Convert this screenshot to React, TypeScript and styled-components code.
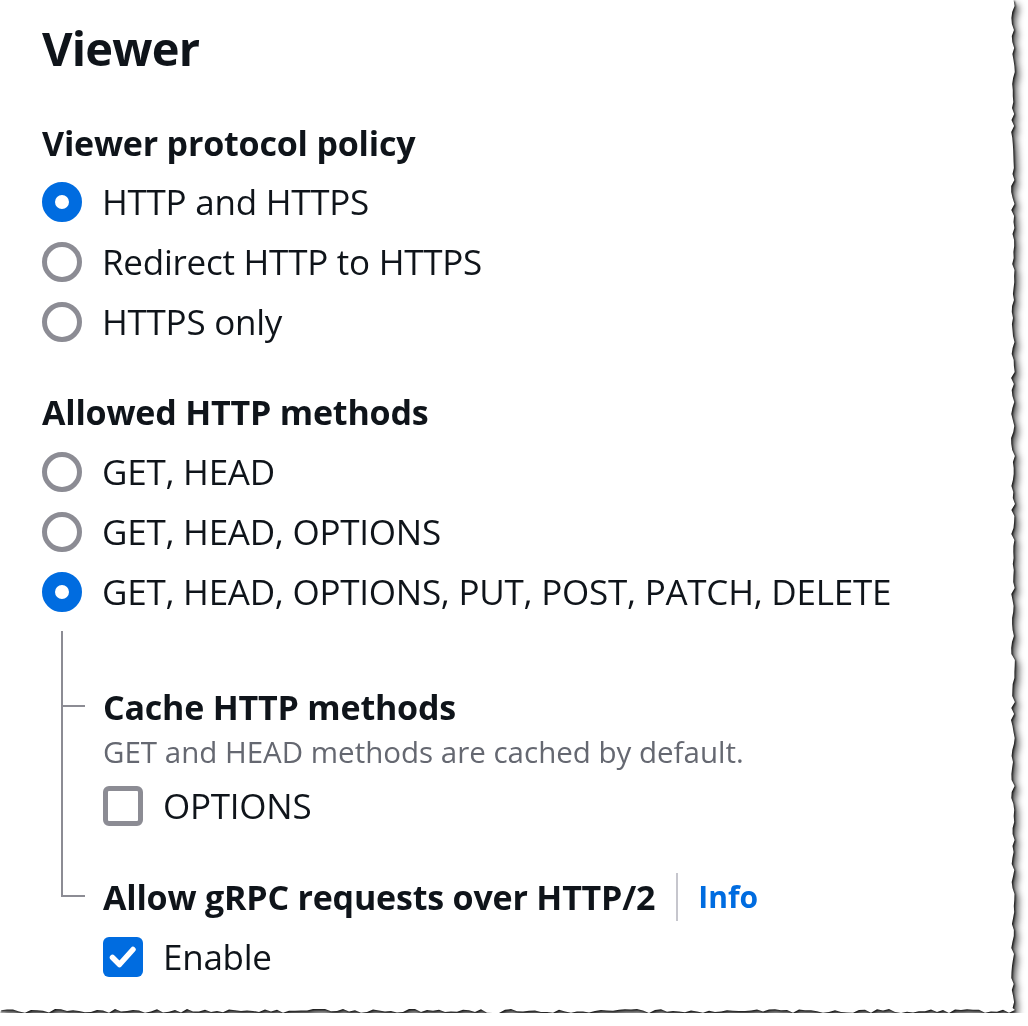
import React from "react";
import styled, { createGlobalStyle } from "styled-components";

const GlobalStyle = createGlobalStyle`
  html, body {
    margin: 0;
    padding: 0;
    background: #ffffff;
  }
  body {
    font-family: "Open Sans", "Noto Sans", Arial, sans-serif;
    color: #0f141a;
  }
`;

const PAPER_W = 1015;
const PAPER_H = 1013;

function tornEdge(): string {
  let seed = 11;
  const rnd = () => {
    seed = (seed * 9301 + 49297) % 233280;
    return seed / 233280;
  };
  const pts: string[] = ["0px 0px"];
  for (let y = 0; y <= PAPER_H; y += 6) {
    const x = PAPER_W - 2 + (rnd() - 0.5) * 4;
    pts.push(`${x.toFixed(1)}px ${y}px`);
  }
  for (let x = PAPER_W; x >= 0; x -= 6) {
    const y = PAPER_H - 2 + (rnd() - 0.5) * 4;
    pts.push(`${x}px ${y.toFixed(1)}px`);
  }
  pts.push(`0px ${PAPER_H}px`);
  return `polygon(${pts.join(", ")})`;
}

const Shadow = styled.div`
  width: ${PAPER_W}px;
  height: ${PAPER_H}px;
  filter: drop-shadow(1.5px 1.5px 0.8px rgba(0, 0, 0, 0.9))
    drop-shadow(3px 4px 3.5px rgba(0, 0, 0, 0.7));
`;

const Paper = styled.div`
  width: ${PAPER_W}px;
  height: ${PAPER_H}px;
  box-sizing: border-box;
  background: #ffffff;
  padding: 18px 0 0 42px;
  display: flex;
  flex-direction: column;
`;

const Heading = styled.h2`
  margin: 0;
  font-size: 47px;
  line-height: 60px;
  font-weight: 700;
  letter-spacing: -0.8px;
  color: #0f141a;
`;

const Field = styled.section<{ $top: number }>`
  margin-top: ${(p) => p.$top}px;
  display: flex;
  flex-direction: column;
`;

const Label = styled.div`
  display: flex;
  align-items: center;
  font-size: 34px;
  line-height: 50px;
  font-weight: 700;
  letter-spacing: -0.2px;
  color: #0f141a;
`;

const Description = styled.div`
  font-size: 29.5px;
  line-height: 40px;
  color: #656871;
`;

const Group = styled.div<{ $top: number }>`
  margin-top: ${(p) => p.$top}px;
  display: flex;
  flex-direction: column;
  gap: 10px;
`;

const OptionRow = styled.div`
  display: flex;
  align-items: center;
  gap: 20px;
  height: 50px;
  font-size: 35px;
  line-height: 50px;
  letter-spacing: -0.25px;
  color: #0f141a;
`;

const RadioDot = styled.span<{ $checked?: boolean }>`
  box-sizing: border-box;
  width: 40px;
  height: 40px;
  flex: none;
  border-radius: 50%;
  background: #ffffff;
  border: ${(p) => (p.$checked ? "13px solid #006ce0" : "5px solid #8c8c94")};
`;

const Box = styled.span<{ $checked?: boolean }>`
  box-sizing: border-box;
  width: 40px;
  height: 40px;
  flex: none;
  border-radius: 6px;
  display: flex;
  align-items: center;
  justify-content: center;
  background: ${(p) => (p.$checked ? "#006ce0" : "#ffffff")};
  border: ${(p) => (p.$checked ? "none" : "5px solid #8c8c94")};
`;

const Nested = styled.div`
  margin-top: 14px;
  margin-left: 19px;
  display: flex;
  flex-direction: column;
`;

const Branch = styled.div`
  display: flex;
`;

const Connector = styled.div<{ $last?: boolean }>`
  width: 42px;
  flex: none;
  box-sizing: border-box;
  border-left: ${(p) => (p.$last ? "none" : "2px solid #8c8c94")};
`;

const Tick = styled.div<{ $drop: number; $last?: boolean }>`
  box-sizing: border-box;
  height: ${(p) => p.$drop + 1}px;
  width: ${(p) => (p.$last ? 24 : 22)}px;
  border-bottom: 2px solid #8c8c94;
  border-left: ${(p) => (p.$last ? "2px solid #8c8c94" : "none")};
`;

const BranchBody = styled.div<{ $top: number; $bottom: number }>`
  padding-top: ${(p) => p.$top}px;
  padding-bottom: ${(p) => p.$bottom}px;
  display: flex;
  flex-direction: column;
`;

const Divider = styled.span`
  width: 2px;
  height: 48px;
  background: #c6c6cd;
  margin: 0 20px 0 21px;
`;

const InfoLink = styled.a`
  font-size: 30px;
  font-weight: 700;
  letter-spacing: 0;
  color: #006ce0;
  text-decoration: none;
`;

const Check = () => (
  <svg width="40" height="40" viewBox="0 0 40 40" fill="none">
    <polyline
      points="9.5,20.5 16.5,27.5 30,12.5"
      stroke="#ffffff"
      strokeWidth="5.5"
      strokeLinecap="round"
      strokeLinejoin="round"
    />
  </svg>
);

const Radio = ({ label, checked }: { label: string; checked?: boolean }) => (
  <OptionRow>
    <RadioDot $checked={checked} />
    <span>{label}</span>
  </OptionRow>
);

const Checkbox = ({ label, checked }: { label: string; checked?: boolean }) => (
  <OptionRow>
    <Box $checked={checked}>{checked && <Check />}</Box>
    <span>{label}</span>
  </OptionRow>
);

export default function App() {
  const edge = tornEdge();
  return (
    <>
      <GlobalStyle />
      <Shadow>
        <Paper style={{ clipPath: edge }}>
          <Heading>Viewer</Heading>

          <Field $top={40}>
            <Label>Viewer protocol policy</Label>
            <Group $top={9}>
              <Radio label="HTTP and HTTPS" checked />
              <Radio label="Redirect HTTP to HTTPS" />
              <Radio label="HTTPS only" />
            </Group>
          </Field>

          <Field $top={40}>
            <Label>Allowed HTTP methods</Label>
            <Group $top={10}>
              <Radio label="GET, HEAD" />
              <Radio label="GET, HEAD, OPTIONS" />
              <Radio label="GET, HEAD, OPTIONS, PUT, POST, PATCH, DELETE" checked />
            </Group>
          </Field>

          <Nested>
            <Branch>
              <Connector>
                <Tick $drop={75} />
              </Connector>
              <BranchBody $top={51} $bottom={41}>
                <Label>Cache HTTP methods</Label>
                <Description>GET and HEAD methods are cached by default.</Description>
                <Group $top={9}>
                  <Checkbox label="OPTIONS" />
                </Group>
              </BranchBody>
            </Branch>
            <Branch>
              <Connector $last>
                <Tick $drop={24} $last />
              </Connector>
              <BranchBody $top={0} $bottom={0}>
                <Label>
                  Allow gRPC requests over HTTP/2
                  <Divider />
                  <InfoLink href="#">Info</InfoLink>
                </Label>
                <Group $top={10}>
                  <Checkbox label="Enable" checked />
                </Group>
              </BranchBody>
            </Branch>
          </Nested>
        </Paper>
      </Shadow>
    </>
  );
}
